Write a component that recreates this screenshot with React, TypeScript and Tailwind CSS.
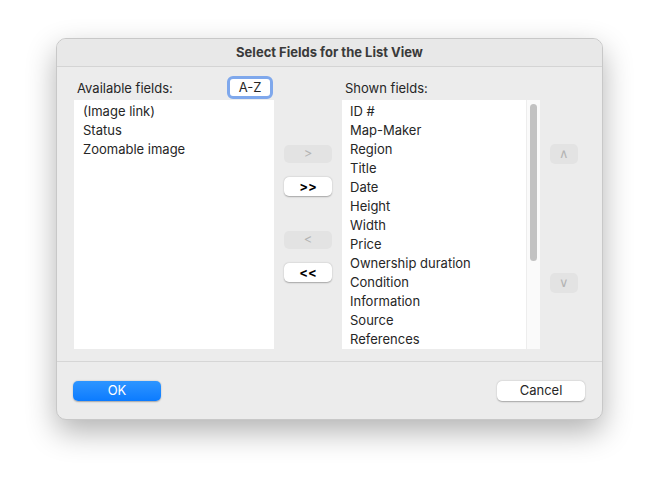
import React from "react";

const avail = ["(Image link)", "Status", "Zoomable image"];
const shown = ["ID #", "Map-Maker", "Region", "Title", "Date", "Height", "Width", "Price", "Ownership duration", "Condition", "Information", "Source", "References"];

function Btn({ children, disabled, className = "" }: { children: React.ReactNode; disabled?: boolean; className?: string }) {
  return (
    <div className={`flex items-center justify-center rounded-[5px] text-[13px] ${disabled ? "bg-[#e3e3e3] text-[#b4b4b4]" : "bg-white text-black font-bold shadow-[0_0.5px_1.5px_rgba(0,0,0,0.3)]"} ${className}`}>
      {children}
    </div>
  );
}

export default function App() {
  return (
    <div className="w-[659px] h-[495px] bg-white pt-[38px] pl-[56px]" style={{ fontFamily: "Inter, 'Liberation Sans', sans-serif" }}>
      <div className="w-[547px] h-[382px] rounded-[10px] bg-[#ececec] border border-[#c8c8c8] shadow-[0_12px_30px_rgba(0,0,0,0.3)] flex flex-col overflow-hidden text-[#262626]">
        <div className="h-[28px] flex items-center justify-center text-[13px] font-bold text-[#3a3a3a] bg-[#e8e8e8] border-b border-[#d4d4d4]">
          Select Fields for the List View
        </div>
        <div className="flex px-[17px] pt-[8px]">
          <div className="w-[200px] flex flex-col">
            <div className="flex items-center justify-between h-[25px] pl-[3px]">
              <span className="text-[13px] mt-[2px]">Available fields:</span>
              <div className="mr-[1px] w-[46px] h-[23px] rounded-[6px] bg-white border-[3px] border-[#7fa8ec] flex items-center justify-center text-[13px] shrink-0">A-Z</div>
            </div>
            <div className="h-[249px] bg-white pt-[2px]">
              {avail.map((t) => (
                <div key={t} className="h-[19px] leading-[19px] pl-[9px] text-[13px]">{t}</div>
              ))}
            </div>
          </div>
          <div className="w-[68px] flex flex-col items-center pt-[70px]">
            <Btn disabled className="w-[48px] h-[18px]">&gt;</Btn>
            <Btn className="w-[48px] h-[19px] mt-[14px]">&gt;&gt;</Btn>
            <Btn disabled className="w-[48px] h-[18px] mt-[35px]">&lt;</Btn>
            <Btn className="w-[48px] h-[19px] mt-[14px]">&lt;&lt;</Btn>
          </div>
          <div className="w-[198px] flex flex-col">
            <div className="h-[25px] pl-[3px] flex items-center"><span className="text-[13px] mt-[2px]">Shown fields:</span></div>
            <div className="h-[249px] bg-white flex">
              <div className="flex-1 pt-[2px] overflow-hidden">
                {shown.map((t) => (
                  <div key={t} className="h-[19px] leading-[19px] pl-[8px] text-[13px]">{t}</div>
                ))}
              </div>
              <div className="w-[14px] bg-[#fafafa] border-l border-[#ededed] flex justify-center pt-[4px]">
                <div className="w-[7px] h-[157px] rounded-full bg-[#c2c2c2]" />
              </div>
            </div>
          </div>
          <div className="flex-1 flex flex-col items-center pt-[69px] pl-[3px]">
            <Btn disabled className="w-[28px] h-[20px] text-[11px]">∧</Btn>
            <Btn disabled className="w-[28px] h-[20px] mt-[109px] text-[11px]">∨</Btn>
          </div>
        </div>
        <div className="mt-[12px] border-t border-[#d6d6d6]" />
        <div className="flex justify-between px-[16px] pt-[19px]">
          <div className="w-[88px] h-[20px] rounded-[5px] bg-gradient-to-b from-[#2d95ff] to-[#0a7bff] text-white text-[13px] flex items-center justify-center shadow-[0_0.5px_1.5px_rgba(0,0,0,0.3)]">OK</div>
          <div className="w-[88px] h-[20px] rounded-[5px] bg-white text-[13px] flex items-center justify-center shadow-[0_0.5px_1.5px_rgba(0,0,0,0.3)] mr-[1px]">Cancel</div>
        </div>
      </div>
    </div>
  );
}
